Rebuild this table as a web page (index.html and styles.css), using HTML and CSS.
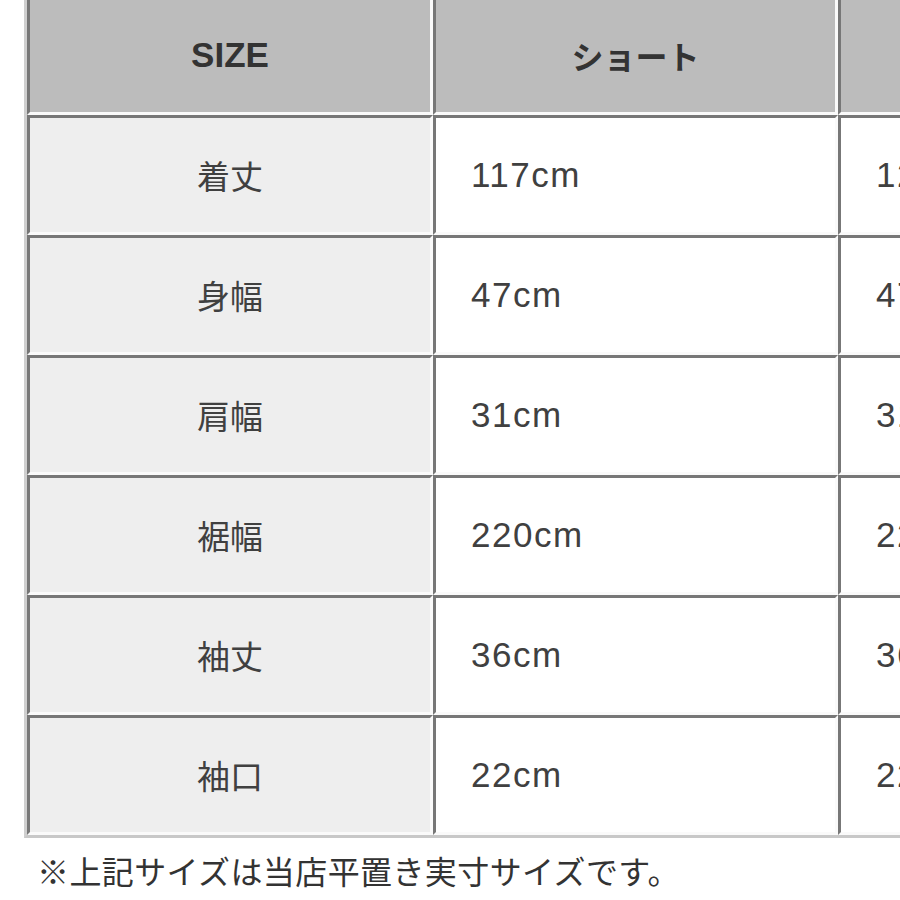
FILE: index.html
```html
<!DOCTYPE html>
<html lang="ja">
<head>
<meta charset="utf-8">
<title>サイズ表</title>
<link rel="stylesheet" href="styles.css">
</head>
<body>
<div class="page">
  <table class="size-table">
    <colgroup>
      <col class="c1"><col class="c2"><col class="c3">
    </colgroup>
    <thead>
      <tr>
        <th>SIZE</th>
        <th class="jp">ショート</th>
        <th class="jp">ロング</th>
      </tr>
    </thead>
    <tbody>
      <tr><td class="label">着丈</td><td>117cm</td><td>127cm</td></tr>
      <tr><td class="label">身幅</td><td>47cm</td><td>47cm</td></tr>
      <tr><td class="label">肩幅</td><td>31cm</td><td>31cm</td></tr>
      <tr><td class="label">裾幅</td><td>220cm</td><td>220cm</td></tr>
      <tr><td class="label">袖丈</td><td>36cm</td><td>36cm</td></tr>
      <tr><td class="label">袖口</td><td>22cm</td><td>22cm</td></tr>
    </tbody>
  </table>
  <p class="note">※上記サイズは当店平置き実寸サイズです。</p>
</div>
</body>
</html>
```
FILE: styles.css
```css
html, body {
  margin: 0;
  padding: 0;
  background: #ffffff;
  overflow: hidden;
}
body {
  width: 900px;
  height: 900px;
  font-family: "Liberation Sans", "Noto Sans CJK JP", sans-serif;
  color: #3a3a3a;
}
.page {
  margin-top: -8px;
  padding-left: 24px;
  width: 1400px;
}
.size-table {
  border-collapse: separate;
  border-spacing: 0;
  table-layout: fixed;
  width: 1222px;
  border: 3px solid;
  border-color: #cfcfcf #c8c8c8 #c8c8c8 #cfcfcf;
}
.c1 { width: 406px; }
.c2 { width: 405px; }
.c3 { width: 405px; }
.size-table th,
.size-table td {
  box-sizing: border-box;
  height: 120px;
  padding: 0 0 0 35px;
  border-style: solid;
  border-width: 3px;
  border-color: #777777 #fafafa #fafafa #777777;
  font-size: 35px;
  font-weight: normal;
  text-align: left;
  vertical-align: middle;
  white-space: nowrap;
}
.size-table th {
  background: #bcbcbc;
  font-weight: bold;
  text-align: center;
  padding: 0;
  color: #333333;
  font-size: 35px;
}
.size-table th.jp {
  font-family: "Noto Sans CJK JP", sans-serif;
  font-size: 32px;
}
.size-table td {
  background: #ffffff;
  letter-spacing: 1.5px;
  color: #404040;
}
.size-table td.label {
  background: #eeeeee;
  text-align: center;
  padding: 0;
  letter-spacing: 0;
  font-family: "Noto Sans CJK JP", sans-serif;
  font-size: 33px;
}
.note {
  margin: 8px 0 0 0;
  padding-left: 13px;
  font-family: "Noto Sans CJK JP", sans-serif;
  font-size: 32px;
  letter-spacing: 0.4px;
  line-height: 48px;
  color: #333333;
}
```
